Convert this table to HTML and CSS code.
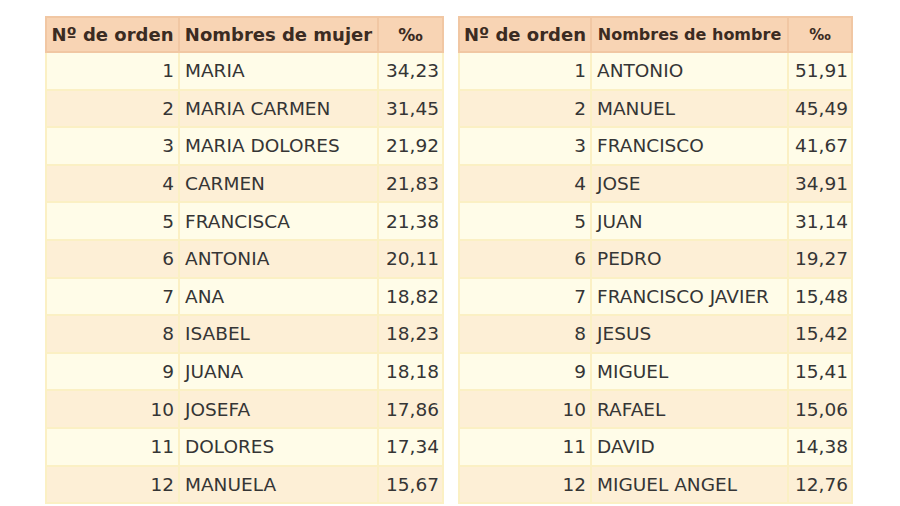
FILE: index.html
```html
<!DOCTYPE html>
<html lang="es">
<head>
<meta charset="utf-8">
<title>Nombres</title>
<link rel="stylesheet" href="styles.css">
</head>
<body>
<div class="page">
  <table class="names women">
    <colgroup><col class="c-ord"><col class="c-name"><col class="c-pct"></colgroup>
    <thead>
      <tr><th>Nº de orden</th><th>Nombres de mujer</th><th class="pct-h">‰</th></tr>
    </thead>
    <tbody>
      <tr><td class="ord">1</td><td class="nm">MARIA</td><td class="pct">34,23</td></tr>
      <tr><td class="ord">2</td><td class="nm">MARIA CARMEN</td><td class="pct">31,45</td></tr>
      <tr><td class="ord">3</td><td class="nm">MARIA DOLORES</td><td class="pct">21,92</td></tr>
      <tr><td class="ord">4</td><td class="nm">CARMEN</td><td class="pct">21,83</td></tr>
      <tr><td class="ord">5</td><td class="nm">FRANCISCA</td><td class="pct">21,38</td></tr>
      <tr><td class="ord">6</td><td class="nm">ANTONIA</td><td class="pct">20,11</td></tr>
      <tr><td class="ord">7</td><td class="nm">ANA</td><td class="pct">18,82</td></tr>
      <tr><td class="ord">8</td><td class="nm">ISABEL</td><td class="pct">18,23</td></tr>
      <tr><td class="ord">9</td><td class="nm">JUANA</td><td class="pct">18,18</td></tr>
      <tr><td class="ord">10</td><td class="nm">JOSEFA</td><td class="pct">17,86</td></tr>
      <tr><td class="ord">11</td><td class="nm">DOLORES</td><td class="pct">17,34</td></tr>
      <tr><td class="ord">12</td><td class="nm">MANUELA</td><td class="pct">15,67</td></tr>
    </tbody>
  </table>
  <table class="names men">
    <colgroup><col class="c-ord"><col class="c-name"><col class="c-pct"></colgroup>
    <thead>
      <tr><th>Nº de orden</th><th class="small-h">Nombres de hombre</th><th class="pct-h small-pct">‰</th></tr>
    </thead>
    <tbody>
      <tr><td class="ord">1</td><td class="nm">ANTONIO</td><td class="pct">51,91</td></tr>
      <tr><td class="ord">2</td><td class="nm">MANUEL</td><td class="pct">45,49</td></tr>
      <tr><td class="ord">3</td><td class="nm">FRANCISCO</td><td class="pct">41,67</td></tr>
      <tr><td class="ord">4</td><td class="nm">JOSE</td><td class="pct">34,91</td></tr>
      <tr><td class="ord">5</td><td class="nm">JUAN</td><td class="pct">31,14</td></tr>
      <tr><td class="ord">6</td><td class="nm">PEDRO</td><td class="pct">19,27</td></tr>
      <tr><td class="ord">7</td><td class="nm">FRANCISCO JAVIER</td><td class="pct">15,48</td></tr>
      <tr><td class="ord">8</td><td class="nm">JESUS</td><td class="pct">15,42</td></tr>
      <tr><td class="ord">9</td><td class="nm">MIGUEL</td><td class="pct">15,41</td></tr>
      <tr><td class="ord">10</td><td class="nm">RAFAEL</td><td class="pct">15,06</td></tr>
      <tr><td class="ord">11</td><td class="nm">DAVID</td><td class="pct">14,38</td></tr>
      <tr><td class="ord">12</td><td class="nm">MIGUEL ANGEL</td><td class="pct">12,76</td></tr>
    </tbody>
  </table>
</div>
</body>
</html>
```

FILE: styles.css
```css
html, body {
  margin: 0;
  padding: 0;
  background: #ffffff;
}

.page {
  display: flex;
  align-items: flex-start;
  gap: 14px;
  padding: 16px 0 0 45px;
  font-family: "DejaVu Sans", "Liberation Sans", sans-serif;
  color: #353535;
}

.names {
  border-collapse: collapse;
  table-layout: fixed;
}

.women { width: 397px; }
.men { width: 393px; }

.women .c-ord { width: 133px; }
.women .c-name { width: 199px; }
.women .c-pct { width: 65px; }

.men .c-ord { width: 132px; }
.men .c-name { width: 197px; }
.men .c-pct { width: 64px; }

.names th {
  height: 35px;
  box-sizing: border-box;
  background: #f8d4b4;
  border: 2px solid #f1c7a3;
  color: #3b2b22;
  font-weight: bold;
  font-size: 18px;
  padding: 0;
  white-space: nowrap;
  text-align: center;
  overflow: visible;
}

.names th.small-h {
  font-size: 16px;
}

.names th.pct-h {
  font-size: 17px;
}

.names th.small-pct {
  font-size: 15px;
}

.names td {
  height: 37.6px;
  box-sizing: border-box;
  border: 2px solid #fbf0c4;
  font-size: 18.5px;
  padding: 0 4px 0 5px;
  white-space: nowrap;
}

.names tbody tr:nth-child(odd) td {
  background: #fffce8;
}

.names tbody tr:nth-child(even) td {
  background: #fdefd6;
}

.ord { text-align: right; }
.nm { text-align: left; }
.pct { text-align: right; }
.names td.pct { padding-right: 3px; }
```
